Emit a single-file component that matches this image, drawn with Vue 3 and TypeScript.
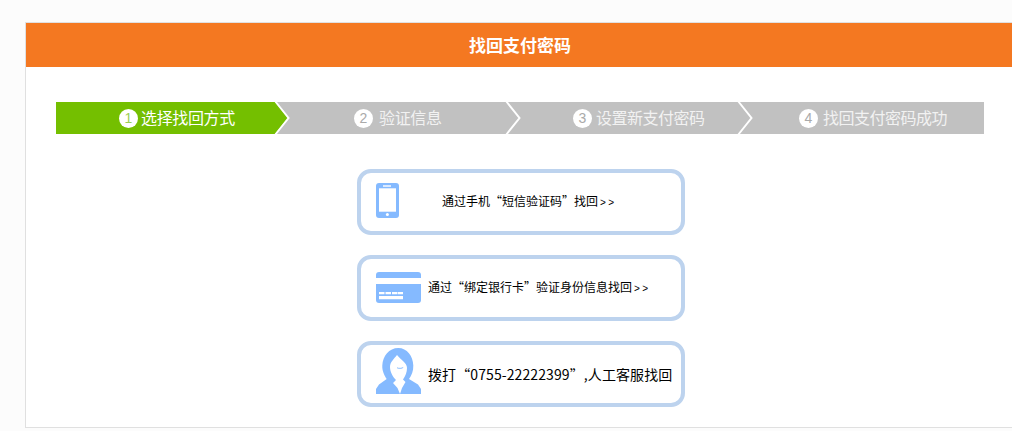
<script setup lang="ts">
const steps = [
  { n: 1, label: '选择找回方式', cls: 'step-1' },
  { n: 2, label: '验证信息', cls: 'step-2' },
  { n: 3, label: '设置新支付密码', cls: 'step-3' },
  { n: 4, label: '找回支付密码成功', cls: 'step-4' },
]
</script>

<template>
  <div class="panel">
    <h1 class="title">找回支付密码</h1>
    <div class="content">
      <div class="steps">
        <div v-for="s in steps" :key="s.n" class="step" :class="s.cls">
          <span class="num">{{ s.n }}</span>
          <span class="label">{{ s.label }}</span>
          <svg v-if="s.n < 4" class="arrow" width="16" height="32" viewBox="0 0 16 32">
            <polygon class="arrow-fill" points="0,0 13,16 0,32" />
            <polyline points="0,-1 13.5,16 0,33" fill="none" stroke="#fff" stroke-width="2" />
          </svg>
        </div>
      </div>

      <div class="options">
        <a class="option">
          <span class="icon icon-phone">
            <svg width="23" height="35" viewBox="0 0 23 35">
              <rect width="23" height="35" rx="3" fill="#85baff" />
              <rect x="3" y="5.300" width="17" height="23.400" fill="#fff" />
              <rect x="7" y="2.300" width="8" height="1.400" fill="#fff" />
              <circle cx="11.400" cy="31.600" r="1.500" fill="#fff" />
            </svg>
          </span>
          <span class="text text-first">通过手机“短信验证码”找回<i class="more">&gt;&gt;</i></span>
        </a>
        <a class="option">
          <span class="icon icon-card">
            <svg width="45" height="31" viewBox="0 0 45 31">
              <path d="M3 0h39a3 3 0 0 1 3 3v3H0V3a3 3 0 0 1 3-3z" fill="#85baff" />
              <path d="M0 12h45v16a3 3 0 0 1-3 3H3a3 3 0 0 1-3-3z" fill="#85baff" />
              <path d="M3 20h5.500v2.300H3zM9.500 20H15v2.300H9.500zM16 20h5.500v2.300H16zM22 20h5v2.300h-5zM3 24h24v3.200H3z" fill="#fff" />
            </svg>
          </span>
          <span class="text">通过“绑定银行卡”验证身份信息找回<i class="more">&gt;&gt;</i></span>
        </a>
        <a class="option">
          <span class="icon icon-person">
            <svg width="45" height="46" viewBox="0 0 45 46">
              <path d="M22.300 0C13 0 6.800 8 6.300 17.500 6 23 8.500 27.500 10.700 31L3 36.500 0 41v5h45v-5l-3-4.500L33 31c2.500-3.500 4.500-8 4.300-13.500C37 8 31 0 22.300 0z" fill="#85baff" />
              <path d="M21 7C18 11 14 14 14 19c0 5 3 10 6 13l-3 3 4.500 5L24 46l2-6 3.500-6-2.500-2.500C29.500 28 31 24 31 20 31 15 25 12 21 7z" fill="#fff" />
              <path d="M21 19.800c2 .6 4.200.5 6.200-.3-1.800 1.300-4.400 1.400-6.200.3z" fill="#85baff" stroke="#85baff" stroke-width=".5" />
            </svg>
          </span>
          <span class="text text-call">拨打“0755-22222399”,人工客服找回</span>
        </a>
      </div>
    </div>
  </div>
</template>

<style>
html, body {
  margin: 0;
  overflow: hidden;
  background: #fcfcfc;
}
</style>

<style scoped>
.panel {
  box-sizing: border-box;
  width: 1000px;
  margin: 22px 0 0 25px;
  background: #fff;
  border: 1px solid #e0e0e0;
  font-family: "Noto Sans CJK SC", "Liberation Sans", sans-serif;
}
.title {
  box-sizing: border-box;
  margin: 0;
  height: 44px;
  padding-right: 10px;
  background: #f47821;
  color: #fff;
  font-size: 17px;
  font-weight: 700;
  line-height: 43px;
  text-align: center;
}
.content {
  padding: 35px 30px 20px;
}
.steps {
  display: flex;
  width: 928px;
  height: 32px;
  background: #c1c1c1;
  font-size: 16px;
}
.step {
  position: relative;
  display: flex;
  align-items: center;
  box-sizing: border-box;
  height: 32px;
  color: #f2f2f2;
}
.step-1 { width: 219px; padding-left: 63px; gap: 4px; background: #74bf00; color: #fff; }
.step-2 { width: 231px; padding-left: 79px; gap: 7px; }
.step-3 { width: 232px; padding-left: 67px; gap: 5px; }
.step-4 { width: 246px; padding-left: 61px; gap: 6px; }
.num {
  flex: none;
  width: 19px;
  height: 19px;
  margin-top: 1px;
  border-radius: 50%;
  background: #fff;
  color: #aaa;
  font-family: "Liberation Sans", sans-serif;
  font-size: 14px;
  line-height: 19px;
  text-align: center;
}
.step-1 .num { color: #9ccf55; }
.label {
  margin-left: -1px;
  padding-bottom: 2px;
  letter-spacing: -0.35px;
  line-height: 30px;
  white-space: nowrap;
}
.step-3 .label,
.step-4 .label { letter-spacing: -0.5px; }
.arrow {
  position: absolute;
  top: 0;
  left: 100%;
  z-index: 1;
  overflow: visible;
}
.arrow-fill { fill: #c1c1c1; }
.step-1 .arrow-fill { fill: #74bf00; }
.options {
  display: flex;
  flex-direction: column;
  gap: 20px;
  width: 328px;
  margin: 35px 0 0 301px;
}
.option {
  box-sizing: border-box;
  display: flex;
  align-items: center;
  height: 66px;
  padding-left: 15px;
  border: 4px solid #bdd3ee;
  border-radius: 14px;
  background: #fff;
  color: #000;
}
.icon {
  flex: none;
  display: flex;
  width: 52px;
}
.icon-phone { margin-top: -3px; }
.icon-card { margin-top: -1px; }
.icon-person { margin-top: -6px; }
.text {
  font-size: 12px;
  line-height: 20px;
  white-space: nowrap;
}
.text-first { padding-left: 14px; }
.text-call { font-size: 14px; letter-spacing: 0.1px; }
.more {
  margin-left: 2px;
  font-family: "Liberation Sans", sans-serif;
  font-size: 10px;
  font-style: normal;
  letter-spacing: 2.5px;
}
</style>
